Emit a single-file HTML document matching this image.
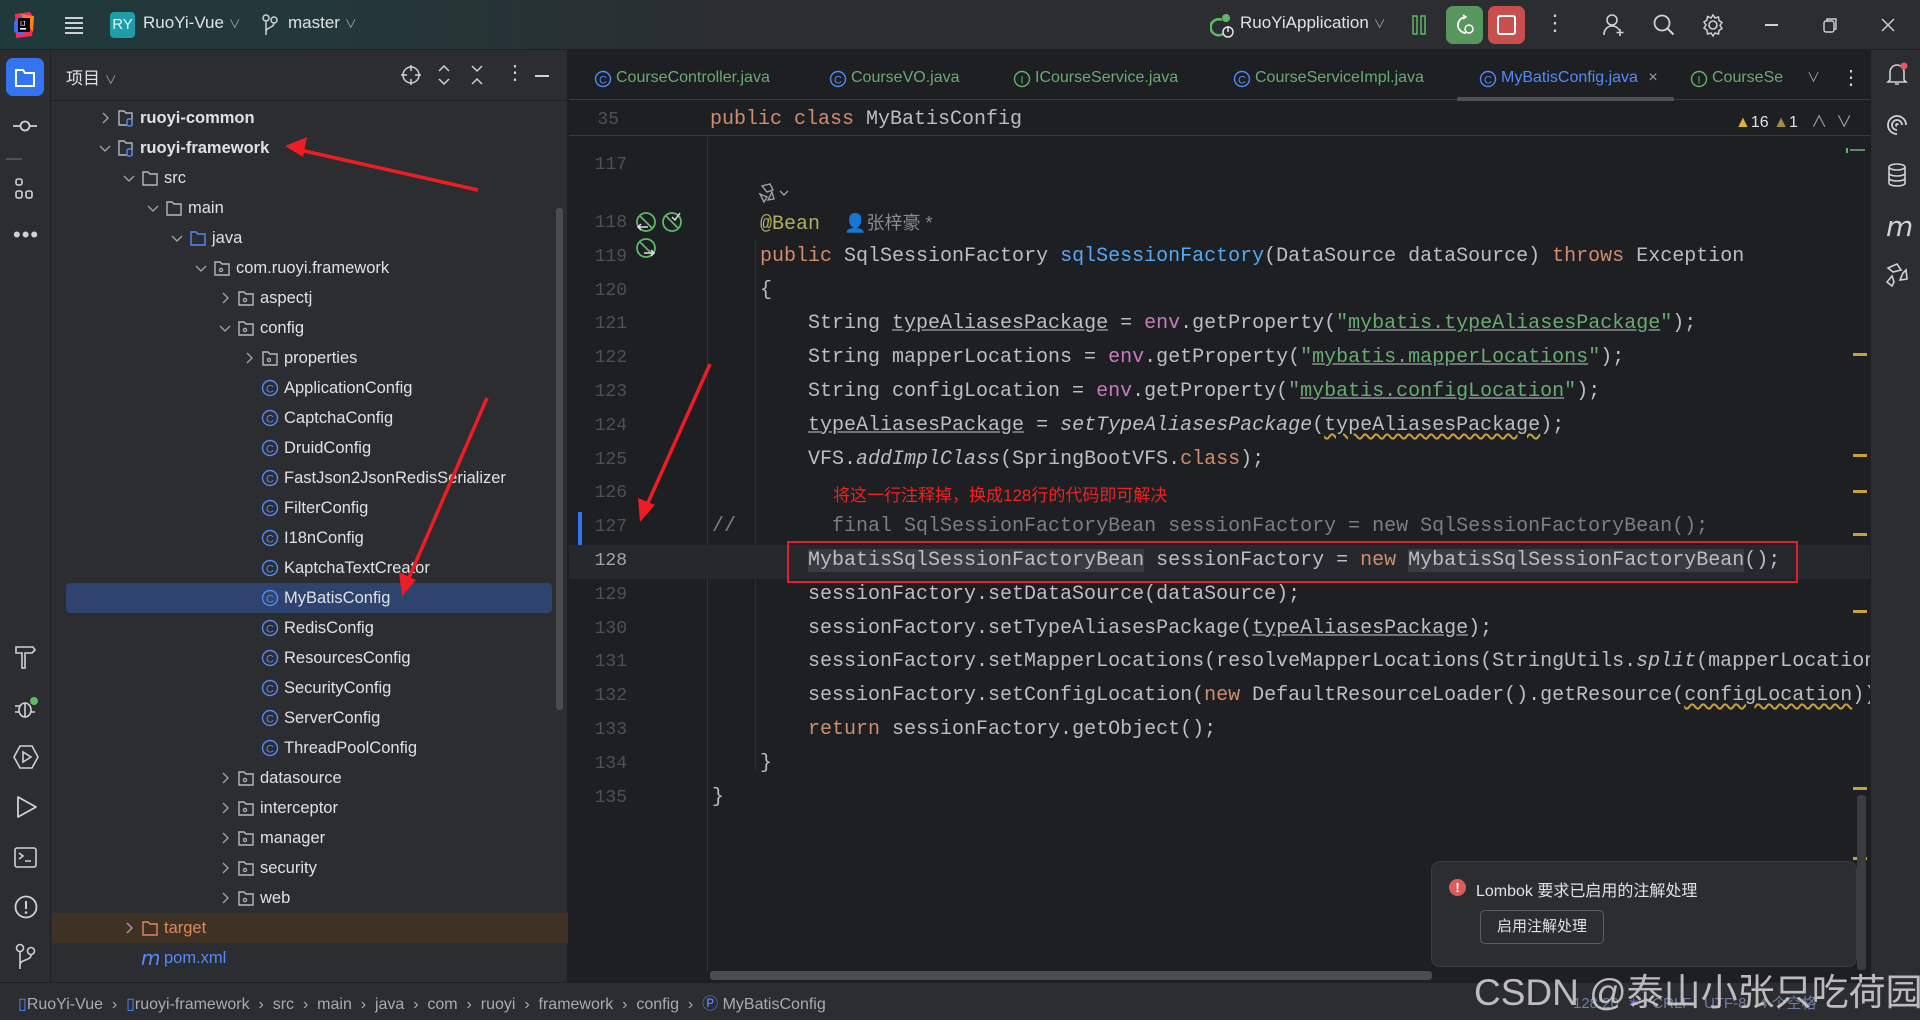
<!DOCTYPE html>
<html><head><meta charset="utf-8"><style>
*{margin:0;padding:0;box-sizing:border-box}
body{width:1920px;height:1020px;overflow:hidden;background:#1e1f22;font-family:"Liberation Sans","Noto Sans CJK SC",sans-serif;color:#dfe1e5;position:relative}
.a{position:absolute}
#title{left:0;top:0;width:1920px;height:50px;background:linear-gradient(90deg,#20393b 0%,#23383a 15%,#2b2d30 40%);border-bottom:1px solid #1e1f22}
#lstrip{left:0;top:50px;width:51px;height:932px;background:#2b2d30;border-right:1px solid #1e1f22}
#rstrip{left:1870px;top:50px;width:50px;height:932px;background:#2b2d30;border-left:1px solid #1e1f22}
#proj{left:51px;top:50px;width:517px;height:932px;background:#2b2d30;border-right:1px solid #1e1f22}
.row{position:absolute;height:30px;line-height:30px;font-size:16.5px;color:#dfe1e5;white-space:nowrap}
.chev{position:absolute;top:9px;width:12px;height:12px}
.ic{position:absolute;top:6px;width:18px;height:18px}
#tabs{left:569px;top:50px;width:1301px;height:50px;background:#1e1f22;border-bottom:1px solid #393b40}
.tab{position:absolute;top:3px;height:50px;line-height:50px;font-size:16px;color:#6aab73;white-space:nowrap}
.mono{font-family:"Liberation Mono","Noto Sans CJK SC",monospace;font-size:20px;white-space:pre}
.cl{position:absolute;left:712px;height:34px;line-height:34px;color:#bcbec4}
.num{position:absolute;left:570px;width:57px;text-align:right;font-family:"Liberation Mono",monospace;font-size:18px;color:#4b5059;height:34px;line-height:34px}
.k{color:#cf8e6d}.s{color:#6aab73}.m{color:#56a8f5}.f{color:#c77dbb}.an{color:#b3ae60}.i{font-style:italic}.u{text-decoration:underline;text-decoration-color:#6f737a}
.w{text-decoration:underline wavy #c9a13a;text-underline-offset:3px}
.hl{background:#393b40}
.mk{position:absolute;left:1853px;width:14px;height:3px;background:#c9a13a}
.st{color:#a8abb2;font-size:16px}
</style></head><body>

<div id="title" class="a">
 <svg class="a" style="left:12px;top:12px" width="24" height="26" viewBox="0 0 24 26"><path d="M3 2 L18 0 L22 6 L20 24 L4 26 Z" fill="#fe2857"/><path d="M8 2 L22 4 L21 20 Z" fill="#fc801d"/><path d="M2 10 L10 2 L12 24 L2 20Z" fill="#3f6ff6" opacity=".9"/><rect x="6" y="6" width="12" height="14" fill="#000"/><rect x="8" y="16" width="6" height="1.6" fill="#fff"/><text x="8" y="14" font-size="7" fill="#fff" font-family="Liberation Sans">IJ</text></svg>
 <svg class="a" style="left:64px;top:15px" width="20" height="20"><path d="M1 3h18M1 8h18M1 13h18M1 18h18" stroke="#cfd1d6" stroke-width="2"/></svg>
 <div class="a" style="left:110px;top:12px;width:25px;height:26px;background:#1f9ea8;border-radius:4px;font-size:15px;line-height:26px;text-align:center;color:#e0f5f6">RY</div>
 <div class="a" style="left:143px;top:13px;font-size:17px;color:#dfe1e5">RuoYi-Vue <span style="font-size:12px;color:#9da0a8">&#8744;</span></div>
 <svg class="a" style="left:262px;top:14px" width="16" height="22"><circle cx="4" cy="4" r="3" fill="none" stroke="#cfd1d6" stroke-width="1.5"/><circle cx="12" cy="6" r="3" fill="none" stroke="#cfd1d6" stroke-width="1.5"/><path d="M4 7v14M12 9c0 5-8 4-8 9" stroke="#cfd1d6" stroke-width="1.5" fill="none"/></svg>
 <div class="a" style="left:288px;top:13px;font-size:17px;color:#dfe1e5">master <span style="font-size:12px;color:#9da0a8">&#8744;</span></div>
 <svg class="a" style="left:1210px;top:12px" width="28" height="28"><path d="M12 8a8 8 0 1 0 1 14" stroke="#5fb865" stroke-width="2.5" fill="none"/><circle cx="16" cy="6" r="4" fill="#5fb865"/><circle cx="18" cy="20" r="5" fill="none" stroke="#dfe1e5" stroke-width="1.5"/><path d="M18 14v6" stroke="#dfe1e5" stroke-width="1.5"/></svg>
 <div class="a" style="left:1240px;top:13px;font-size:17px;color:#dfe1e5">RuoYiApplication <span style="font-size:12px;color:#9da0a8">&#8744;</span></div>
 <svg class="a" style="left:1412px;top:15px" width="14" height="20"><rect x="1" y="1" width="4" height="18" fill="none" stroke="#5fb865" stroke-width="1.5"/><rect x="9" y="1" width="4" height="18" fill="none" stroke="#5fb865" stroke-width="1.5"/></svg>
 <div class="a" style="left:1446px;top:6px;width:37px;height:38px;background:#57965c;border-radius:7px"></div>
 <svg class="a" style="left:1454px;top:14px" width="22" height="22"><path d="M12 3a8 8 0 1 0 0 16" stroke="#fff" stroke-width="1.8" fill="none"/><path d="M9 1l3 2-3 2" stroke="#fff" stroke-width="1.5" fill="none"/><circle cx="15" cy="15" r="4" fill="none" stroke="#fff" stroke-width="1.5"/></svg>
 <div class="a" style="left:1488px;top:6px;width:37px;height:38px;background:#c94f4f;border-radius:7px"></div>
 <div class="a" style="left:1497px;top:15px;width:19px;height:20px;border:2px solid #fff;border-radius:3px"></div>
 <div class="a" style="left:1544px;top:10px;font-size:22px;color:#cfd1d6">&#8942;</div>
 <svg class="a" style="left:1602px;top:13px" width="24" height="24"><circle cx="10" cy="7" r="5" fill="none" stroke="#cfd1d6" stroke-width="1.6"/><path d="M2 22c0-6 4-9 8-9s6 2 7 4M18 16v7M14.5 19.5h7" stroke="#cfd1d6" stroke-width="1.6" fill="none"/></svg>
 <svg class="a" style="left:1652px;top:13px" width="24" height="24"><circle cx="10" cy="10" r="7.5" fill="none" stroke="#cfd1d6" stroke-width="1.8"/><path d="M15.5 15.5l6 6" stroke="#cfd1d6" stroke-width="2"/></svg>
 <svg class="a" style="left:1701px;top:13px" width="24" height="24"><circle cx="12" cy="12" r="4" fill="none" stroke="#cfd1d6" stroke-width="1.6"/><path d="M12 2l2 3 3.5-1 .5 3.5 3 2-2 3 2 3-3 2-.5 3.5-3.5-1-2 3-2-3-3.5 1L6 17l-3-2 2-3-2-3 3-2 .5-3.5L10 5z" fill="none" stroke="#cfd1d6" stroke-width="1.5"/></svg>
 <div class="a" style="left:1765px;top:24px;width:13px;height:1.5px;background:#cfd1d6"></div>
 <svg class="a" style="left:1823px;top:17px" width="16" height="16"><rect x="1" y="4" width="10" height="11" rx="2" fill="none" stroke="#cfd1d6" stroke-width="1.4"/><path d="M4 4V2h9v10h-2" fill="none" stroke="#cfd1d6" stroke-width="1.4"/></svg>
 <svg class="a" style="left:1881px;top:18px" width="14" height="14"><path d="M1 1l12 12M13 1L1 13" stroke="#cfd1d6" stroke-width="1.4"/></svg>
</div>

<div id="lstrip" class="a">
 <div class="a" style="left:6px;top:8px;width:38px;height:38px;background:#3574f0;border-radius:7px"></div>
 <svg class="a" style="left:14px;top:16px" width="22" height="22"><path d="M2 4h7l2 3h9v13H2z" fill="none" stroke="#fff" stroke-width="2"/></svg>
 <svg class="a" style="left:12px;top:66px" width="26" height="20"><circle cx="13" cy="10" r="4.5" fill="none" stroke="#cfd1d6" stroke-width="1.8"/><path d="M1 10h7M18 10h7" stroke="#cfd1d6" stroke-width="1.8"/></svg>
 <div class="a" style="left:6px;top:108px;width:16px;height:2px;background:#4e5157"></div>
 <svg class="a" style="left:14px;top:127px" width="22" height="24"><rect x="2" y="2" width="6" height="6" rx="2" fill="none" stroke="#cfd1d6" stroke-width="1.6"/><rect x="2" y="14" width="6" height="7" rx="2" fill="none" stroke="#cfd1d6" stroke-width="1.6"/><rect x="12" y="14" width="6" height="7" rx="2" fill="none" stroke="#cfd1d6" stroke-width="1.6"/></svg>
 <div class="a" style="left:13px;top:172px;font-size:22px;color:#cfd1d6;letter-spacing:1px">&#8226;&#8226;&#8226;</div>
 <svg class="a" style="left:13px;top:594px" width="26" height="26"><path d="M3 3h17l2 3-3 3H12v15H9V9H3z" fill="none" stroke="#cfd1d6" stroke-width="1.6"/></svg>
 <svg class="a" style="left:13px;top:645px" width="26" height="26"><ellipse cx="12" cy="15" rx="6" ry="7" fill="none" stroke="#cfd1d6" stroke-width="1.6"/><path d="M2 11h5M2 17h5M17 17h5M12 8v14" stroke="#cfd1d6" stroke-width="1.6"/><circle cx="21" cy="6" r="4" fill="#5fb865"/></svg>
 <svg class="a" style="left:12px;top:694px" width="28" height="26"><path d="M8 2h12l6 11-6 11H8L2 13z" fill="none" stroke="#cfd1d6" stroke-width="1.6"/><path d="M11 8v10l8-5z" fill="none" stroke="#cfd1d6" stroke-width="1.6"/></svg>
 <svg class="a" style="left:15px;top:744px" width="24" height="26"><path d="M3 3l18 10L3 23z" fill="none" stroke="#cfd1d6" stroke-width="1.8" stroke-linejoin="round"/></svg>
 <svg class="a" style="left:13px;top:796px" width="26" height="24"><rect x="2" y="2" width="21" height="19" rx="2" fill="none" stroke="#cfd1d6" stroke-width="1.6"/><path d="M6 7l4 3-4 3M12 15h6" stroke="#cfd1d6" stroke-width="1.6" fill="none"/></svg>
 <svg class="a" style="left:13px;top:844px" width="26" height="26"><circle cx="13" cy="13" r="10.5" fill="none" stroke="#cfd1d6" stroke-width="1.8"/><path d="M13 7v8" stroke="#cfd1d6" stroke-width="2"/><circle cx="13" cy="18.5" r="1.3" fill="#cfd1d6"/></svg>
 <svg class="a" style="left:14px;top:893px" width="24" height="28"><circle cx="6" cy="5" r="3.5" fill="none" stroke="#cfd1d6" stroke-width="1.6"/><circle cx="17" cy="8" r="3.5" fill="none" stroke="#cfd1d6" stroke-width="1.6"/><path d="M6 9v17M17 12c0 6-11 4-11 10" stroke="#cfd1d6" stroke-width="1.6" fill="none"/></svg>
</div>

<div id="proj" class="a">
 <div class="a" style="left:15px;top:14px;font-size:17px;color:#dfe1e5">项目 <span style="font-size:12px;color:#9da0a8">&#8744;</span></div>
 <svg class="a" style="left:350px;top:15px" width="20" height="20"><circle cx="10" cy="10" r="8" fill="none" stroke="#cfd1d6" stroke-width="1.5"/><path d="M10 0v6M10 14v6M0 10h6M14 10h6" stroke="#cfd1d6" stroke-width="1.5"/></svg>
 <svg class="a" style="left:386px;top:15px" width="14" height="20"><path d="M2 6l5-5 5 5M2 14l5 5 5-5" stroke="#cfd1d6" stroke-width="1.5" fill="none"/></svg>
 <svg class="a" style="left:419px;top:15px" width="14" height="20"><path d="M2 1l5 5 5-5M2 19l5-5 5 5" stroke="#cfd1d6" stroke-width="1.5" fill="none"/></svg>
 <div class="a" style="left:454px;top:10px;font-size:20px;color:#cfd1d6">&#8942;</div>
 <div class="a" style="left:484px;top:25px;width:14px;height:1.5px;background:#cfd1d6"></div>
 <div class="a" style="left:0;top:50px;width:517px;height:1px;background:#1e1f22"></div>
 <div class="a" style="left:505px;top:158px;width:7px;height:502px;background:#4a4c50;border-radius:3px"></div>
</div>

<div id="tree" class="a" style="left:0;top:0">
<div class="a" style="left:66px;top:583px;width:486px;height:30px;background:#2e436e;border-radius:4px"></div>
<div class="a" style="left:52px;top:913px;width:516px;height:30px;background:#3d3223"></div>
</div>

<div id="tabs" class="a"></div>
<div class="a" style="left:1457px;top:97px;width:217px;height:5px;background:#4e5157;border-radius:2px"></div>

<div class="a" style="left:569px;top:101px;width:1301px;height:35px;background:#1e1f22;border-bottom:1px solid #393b40"></div>
<div class="num" style="top:103px;left:562px">35</div>
<div class="cl mono" style="top:103px;left:710px"><span class="k">public class</span> MyBatisConfig</div>
<div class="a" style="left:1735px;top:108px;font-size:16px;color:#dfe1e5"><span style="color:#e0b13b">&#9650;</span>16 <span style="color:#a58b47">&#9650;</span>1 &nbsp; <span style="color:#9da0a8">&#8743; &nbsp;&#8744;</span></div>

<div class="a" style="left:707px;top:137px;width:1px;height:834px;background:#313438"></div>
<div class="a" style="left:755px;top:240px;width:1px;height:530px;background:#2b2d30"></div>
<div class="a" style="left:578px;top:512px;width:4px;height:62px;background:#3574f0"></div>

<div class="a" style="left:569px;top:545px;width:1301px;height:34px;background:#26282e"></div>

<div id="code"></div>

<div class="a" style="left:787px;top:541px;width:1011px;height:42px;border:2px solid #e0202a"></div>
<div class="a" style="left:833px;top:481px;font-size:17px;color:#ee2222">将这一行注释掉，换成128行的代码即可解决</div>

<div class="mk" style="top:353px"></div><div class="mk" style="top:454px"></div><div class="mk" style="top:490px"></div><div class="mk" style="top:533px"></div><div class="mk" style="top:610px"></div><div class="mk" style="top:787px"></div><div class="mk" style="top:857px"></div>
<div class="a" style="left:1846px;top:148px;width:2px;height:5px;background:#5fb865"></div>
<div class="a" style="left:1850px;top:149px;width:15px;height:2px;background:#5a8f66"></div>
<div class="a" style="left:1857px;top:795px;width:9px;height:175px;background:#3a3c40;border-radius:3px"></div>
<div class="a" style="left:710px;top:971px;width:722px;height:9px;background:#4a4c50;border-radius:3px"></div>

<div id="rstrip" class="a">
 <svg class="a" style="left:14px;top:12px" width="24" height="26"><path d="M5 18V10a7 7 0 0 1 14 0v8l2 2H3z M10 22h4" fill="none" stroke="#cfd1d6" stroke-width="1.6"/><circle cx="19" cy="4" r="3.5" fill="#e55765"/></svg>
 <svg class="a" style="left:14px;top:63px" width="24" height="24"><path d="M12 21a9 9 0 1 1 9-9M12 17a5 5 0 1 1 5-5M12 13a1 1 0 1 1 1-1" fill="none" stroke="#cfd1d6" stroke-width="1.8"/></svg>
 <svg class="a" style="left:15px;top:113px" width="22" height="24"><ellipse cx="11" cy="4" rx="8" ry="3" fill="none" stroke="#cfd1d6" stroke-width="1.6"/><path d="M3 4v16c0 4 16 4 16 0V4M3 10c0 4 16 4 16 0M3 15c0 4 16 4 16 0" fill="none" stroke="#cfd1d6" stroke-width="1.6"/></svg>
 <div class="a" style="left:15px;top:160px;font-size:28px;font-style:italic;color:#cfd1d6;font-family:'DejaVu Sans',sans-serif">m</div>
 <svg class="a" style="left:13px;top:212px" width="26" height="26"><path d="M4 6l9-4 4 6-8 2zM22 8l1 9-7 1 3-7zM8 24l-5-4 5-6 2 6z" fill="none" stroke="#cfd1d6" stroke-width="1.6"/></svg>
</div>

<div class="a" style="left:1431px;top:861px;width:426px;height:106px;background:#2b2d30;border:1px solid #393b40;border-radius:9px"></div>
<div class="a" style="left:1449px;top:879px;width:17px;height:17px;background:#db5c5c;border-radius:50%;color:#fff;font-size:13px;font-weight:bold;text-align:center;line-height:17px">!</div>
<div class="a" style="left:1476px;top:877px;font-size:16px;color:#dfe1e5">Lombok 要求已启用的注解处理</div>
<div class="a" style="left:1480px;top:910px;width:124px;height:34px;border:1px solid #5a5d63;border-radius:5px;font-size:15px;color:#dfe1e5;text-align:center;line-height:32px">启用注解处理</div>

<div class="a" style="left:0;top:982px;width:1920px;height:38px;background:#2b2d30;border-top:1px solid #1e1f22"></div>
<div class="a st" style="left:18px;top:990px;white-space:nowrap"><span style="color:#548af7">&#9647;</span>RuoYi-Vue &nbsp;&#8250;&nbsp; <span style="color:#548af7">&#9647;</span>ruoyi-framework &nbsp;&#8250;&nbsp; src &nbsp;&#8250;&nbsp; main &nbsp;&#8250;&nbsp; java &nbsp;&#8250;&nbsp; com &nbsp;&#8250;&nbsp; ruoyi &nbsp;&#8250;&nbsp; framework &nbsp;&#8250;&nbsp; config &nbsp;&#8250;&nbsp; <span style="color:#548af7">&#9413;</span> MyBatisConfig</div>
<div class="a" style="left:1573px;top:992px;font-size:15px;color:#6f7ea0;white-space:nowrap">128:20 &nbsp;<span style="color:#7a5cf0">&#10038;</span> &nbsp; CRLF &nbsp; UTF-8 &nbsp; 4 个空格</div>
<div class="a" style="left:1474px;top:962px;font-size:37px;color:rgba(215,215,215,.85);white-space:nowrap;font-family:'Liberation Sans','Noto Sans CJK SC',sans-serif">CSDN @泰山小张只吃荷园</div>

<svg class="a" style="left:0;top:0" width="1920" height="1020">
 <g stroke="#ee1c24" stroke-width="3.5" fill="#ee1c24">
  <line x1="478" y1="190" x2="300" y2="150"/><path d="M285 146l22-9-4 20z" stroke="none"/>
  <line x1="487" y1="398" x2="408" y2="580"/><path d="M402 596l-3-24 17 8z" stroke="none"/>
  <line x1="710" y1="364" x2="647" y2="505"/><path d="M640 522l-2-24 17 7z" stroke="none"/>
 </g>
</svg>

<script>
var rows=[[0,'ch','mod','ruoyi-common',1],[0,'open','mod','ruoyi-framework',1],[1,'open','fold','src'],[2,'open','fold','main'],[3,'open','src','java'],[4,'open','pkg','com.ruoyi.framework'],[5,'ch','pkg','aspectj'],[5,'open','pkg','config'],[6,'ch','pkg','properties'],
[6,'','cls','ApplicationConfig'],[6,'','cls','CaptchaConfig'],[6,'','cls','DruidConfig'],[6,'','cls','FastJson2JsonRedisSerializer'],[6,'','cls','FilterConfig'],[6,'','cls','I18nConfig'],[6,'','cls','KaptchaTextCreator'],[6,'','cls','MyBatisConfig'],[6,'','cls','RedisConfig'],[6,'','cls','ResourcesConfig'],[6,'','cls','SecurityConfig'],[6,'','cls','ServerConfig'],[6,'','cls','ThreadPoolConfig'],
[5,'ch','pkg','datasource'],[5,'ch','pkg','interceptor'],[5,'ch','pkg','manager'],[5,'ch','pkg','security'],[5,'ch','pkg','web'],[1,'ch','tgt','target'],[1,'','pom','pom.xml']];
var icons={
fold:'<path d="M2 3h5l2 2h7v11H2z" fill="none" stroke="#b4b8bf" stroke-width="1.4"/>',
mod:'<path d="M2 2h5l2 2h6v12H2z" fill="none" stroke="#b4b8bf" stroke-width="1.4"/><rect x="10" y="10" width="5" height="7" rx="1.5" fill="#2b2d30" stroke="#548af7" stroke-width="1.4"/>',
src:'<path d="M2 3h5l2 2h7v11H2z" fill="none" stroke="#548af7" stroke-width="1.4"/>',
pkg:'<path d="M2 3h5l2 2h7v11H2z" fill="none" stroke="#b4b8bf" stroke-width="1.4"/><circle cx="8" cy="11" r="1.6" fill="none" stroke="#b4b8bf" stroke-width="1.2"/>',
tgt:'<path d="M2 3h5l2 2h7v11H2z" fill="none" stroke="#e0885a" stroke-width="1.4"/>',
cls:'<circle cx="9" cy="9" r="7.5" fill="none" stroke="#548af7" stroke-width="1.4"/><text x="9" y="13.5" font-size="11" text-anchor="middle" fill="#548af7" font-family="Liberation Sans">C</text>',
pom:'<text x="0" y="16" font-size="20" font-style="italic" fill="#548af7" font-family="DejaVu Sans">m</text>'};
var h='';
rows.forEach(function(r,i){var l=r[0],y=103+30*i,x=99+24*l;
 var col=r[2]=='tgt'?'#e0885a':(r[2]=='pom'?'#548af7':'#dfe1e5');
 h+='<div class="row" style="left:0;top:'+y+'px;width:560px">';
 if(r[1]=='ch')h+='<svg class="chev" style="left:'+x+'px" viewBox="0 0 12 12"><path d="M4 1l5 5-5 5" stroke="#9da0a8" stroke-width="1.4" fill="none"/></svg>';
 if(r[1]=='open')h+='<svg class="chev" style="left:'+x+'px" viewBox="0 0 12 12"><path d="M1 4l5 5 5-5" stroke="#9da0a8" stroke-width="1.4" fill="none"/></svg>';
 h+='<svg class="ic" style="left:'+(117+24*l)+'px" viewBox="0 0 18 18">'+icons[r[2]]+'</svg>';
 h+='<span style="position:absolute;left:'+(140+24*l)+'px;color:'+col+(r[4]?';font-weight:bold':'')+'">'+r[3]+'</span></div>';});
document.getElementById('tree').innerHTML+=h;
var tabs=[[594,'C','CourseController.java'],[829,'C','CourseVO.java'],[1013,'I','ICourseService.java'],[1233,'C','CourseServiceImpl.java'],[1479,'C','MyBatisConfig.java'],[1690,'I','CourseSe']];
var t='';
tabs.forEach(function(a){var c=a[1]=='C'?'#548af7':'#5fb865';var tc=a[2]=='MyBatisConfig.java'?'#548af7':'#6aab73';
 t+='<svg class="a" style="left:'+(a[0]-569)+'px;top:20px" width="18" height="18"><circle cx="9" cy="9" r="7.5" fill="none" stroke="'+c+'" stroke-width="1.4"/><text x="9" y="13.5" font-size="11" text-anchor="middle" fill="'+c+'" font-family="Liberation Sans">'+a[1]+'</text></svg>';
 t+='<div class="tab" style="left:'+(a[0]-569+22)+'px;color:'+tc+'">'+a[2]+(a[2]=='MyBatisConfig.java'?' <span style="color:#9da0a8;margin-left:6px">&#215;</span>':'')+'</div>';});
t+='<div class="tab" style="left:1238px;color:#9da0a8;font-size:13px">&#8744;</div><div class="tab" style="left:1272px;color:#cfd1d6;font-size:20px">&#8942;</div>';
document.getElementById('tabs').innerHTML=t;
function Y(n){return 223+(n-118)*33.8-17;}
var L=[
[117,165-17,''],
[118,null,'    <span class="an">@Bean</span>  <span style="font-family:Liberation Sans,Noto Sans CJK SC;font-size:18px;color:#868a91">&#128100;张梓豪 *</span>'],
[119,null,'    <span class="k">public</span> SqlSessionFactory <span class="m">sqlSessionFactory</span>(DataSource dataSource) <span class="k">throws</span> Exception'],
[120,null,'    {'],
[121,null,'        String <span class="u">typeAliasesPackage</span> = <span class="f">env</span>.getProperty(<span class="s">"<span class="u">mybatis.typeAliasesPackage</span>"</span>);'],
[122,null,'        String mapperLocations = <span class="f">env</span>.getProperty(<span class="s">"<span class="u">mybatis.mapperLocations</span>"</span>);'],
[123,null,'        String configLocation = <span class="f">env</span>.getProperty(<span class="s">"<span class="u">mybatis.configLocation</span>"</span>);'],
[124,null,'        <span class="u">typeAliasesPackage</span> = <span class="i">setTypeAliasesPackage</span>(<span class="w">typeAliasesPackage</span>);'],
[125,null,'        VFS.<span class="i">addImplClass</span>(SpringBootVFS.<span class="k">class</span>);'],
[126,null,''],
[127,null,'<span style="color:#7a7e85">//        final SqlSessionFactoryBean sessionFactory = new SqlSessionFactoryBean();</span>'],
[128,null,'        <span class="hl">MybatisSqlSessionFactoryBean</span> sessionFactory = <span class="k">new</span> <span class="hl">MybatisSqlSessionFactoryBean</span>();'],
[129,null,'        sessionFactory.setDataSource(dataSource);'],
[130,null,'        sessionFactory.setTypeAliasesPackage(<span class="u">typeAliasesPackage</span>);'],
[131,null,'        sessionFactory.setMapperLocations(resolveMapperLocations(StringUtils.<span class="i">split</span>(mapperLocations, ","))));'],
[132,null,'        sessionFactory.setConfigLocation(<span class="k">new</span> DefaultResourceLoader().getResource(<span class="w">configLocation</span>));'],
[133,null,'        <span class="k">return</span> sessionFactory.getObject();'],
[134,null,'    }'],
[135,null,'}']];
var c='<div style="position:absolute;left:0;top:0;width:1870px;height:982px;overflow:hidden">';
L.forEach(function(a){var y=a[1]==null?Y(a[0]):a[1];
 c+='<div class="num" style="top:'+y+'px;'+(a[0]==128?'color:#a1a3ab':'')+'">'+a[0]+'</div>';
 c+='<div class="cl mono" style="top:'+y+'px">'+a[2]+'</div>';});
c+='</div>';
c+='<svg class="a" style="left:758px;top:182px" width="34" height="22"><path d="M4 4l8-2 3 6-6 2zM14 10l2 7-6 1zM2 12l4 8 3-5z" fill="none" stroke="#9da0a8" stroke-width="1.4"/><path d="M22 9l4 4 4-4" stroke="#9da0a8" stroke-width="1.4" fill="none"/></svg>';
c+='<svg class="a" style="left:634px;top:211px" width="52" height="48"><g fill="none" stroke="#5fb865" stroke-width="1.8"><circle cx="12" cy="11" r="9"/><path d="M6 5l12 12"/><circle cx="38" cy="11" r="9"/><path d="M32 5l12 12"/><circle cx="12" cy="37" r="9"/><path d="M6 31l12 12"/></g><path d="M4 16h10M7 13l-3 3 3 3M10 42h10M17 39l3 3-3 3M38 6l3 3 5-7" stroke="#dfe1e5" stroke-width="1.5" fill="none"/></svg>';
document.getElementById('code').innerHTML=c;
</script>
</body></html>
